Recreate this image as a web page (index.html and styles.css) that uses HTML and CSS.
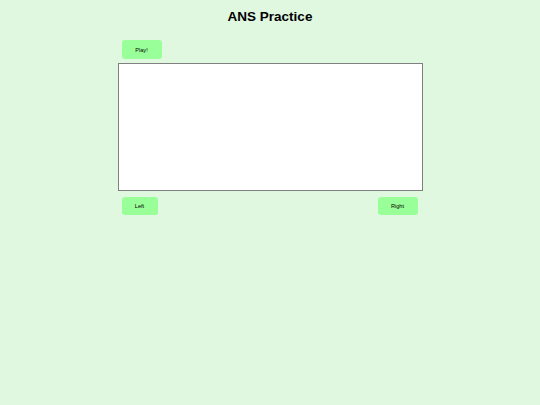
FILE: index.html
```html
<!DOCTYPE html>
<html>
<head>
<meta charset="utf-8">
<link rel="stylesheet" href="styles.css">
</head>
<body>
<h1 class="title">ANS Practice</h1>
<div class="stage">
  <div class="top-row">
    <button class="btn btn-play">Play!</button>
  </div>
  <div class="canvas"></div>
  <div class="bottom-row">
    <button class="btn btn-left">Left</button>
    <button class="btn btn-right">Right</button>
  </div>
</div>
</body>
</html>
```
FILE: styles.css
```css
html, body {
  margin: 0;
  padding: 0;
  background: #e0f7e0;
  font-family: "Liberation Sans", Arial, sans-serif;
  color: #000;
}
.title {
  margin: 0;
  padding-top: 9px;
  height: 16px;
  line-height: 16px;
  font-size: 13.5px;
  font-weight: bold;
  text-align: center;
}
.stage {
  width: 305px;
  margin: 15px auto 0;
}
.top-row {
  display: flex;
  padding-left: 4px;
}
.btn {
  border: none;
  background: #99ff99;
  border-radius: 3px;
  font-family: "Liberation Sans", Arial, sans-serif;
  font-size: 5.6px;
  color: #000;
  padding: 0;
  display: flex;
  align-items: center;
  justify-content: center;
}
.btn-play {
  width: 40px;
  height: 19px;
}
.canvas {
  margin-top: 4px;
  height: 126px;
  background: #fff;
  border: 1px solid #808080;
}
.bottom-row {
  display: flex;
  justify-content: space-between;
  margin-top: 6px;
  padding: 0 5px 0 4px;
}
.btn-left {
  width: 36px;
  height: 18px;
}
.btn-right {
  width: 40px;
  height: 18px;
}
```
